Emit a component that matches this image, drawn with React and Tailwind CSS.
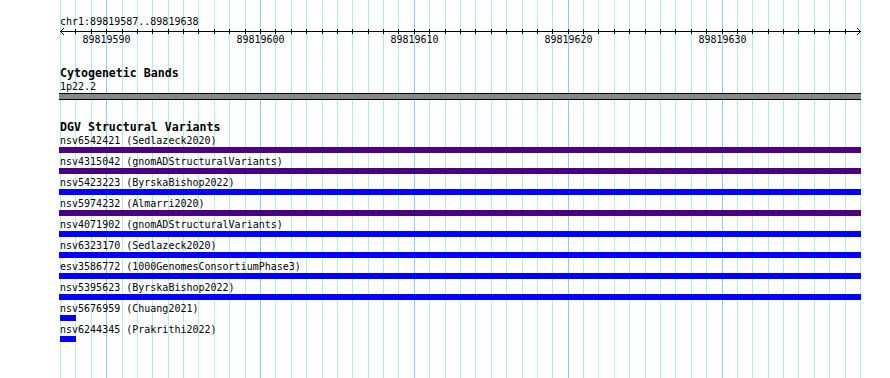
import React from "react";

const START = 89819587;
const END = 89819638;
const PX = 800 / (END - START + 1);

const xs = Array.from({ length: END - START + 2 }, (_, i) => Math.round(60 + i * PX));

const variants = [
  { id: "nsv6542421", src: "Sedlazeck2020", color: "purple", full: true },
  { id: "nsv4315042", src: "gnomADStructuralVariants", color: "purple", full: true },
  { id: "nsv5423223", src: "ByrskaBishop2022", color: "blue", full: true },
  { id: "nsv5974232", src: "Almarri2020", color: "purple", full: true },
  { id: "nsv4071902", src: "gnomADStructuralVariants", color: "blue", full: true },
  { id: "nsv6323170", src: "Sedlazeck2020", color: "blue", full: true },
  { id: "esv3586772", src: "1000GenomesConsortiumPhase3", color: "blue", full: true },
  { id: "nsv5395623", src: "ByrskaBishop2022", color: "blue", full: true },
  { id: "nsv5676959", src: "Chuang2021", color: "blue", full: false },
  { id: "nsv6244345", src: "Prakrithi2022", color: "blue", full: false },
];

function Grid() {
  return (
    <svg className="absolute inset-0" width="890" height="378">
      {xs.map((x, i) => (
        <line
          key={i}
          x1={x + 0.5}
          x2={x + 0.5}
          y1="0"
          y2="378"
          stroke={(START + i) % 10 === 0 ? "#87cefa" : "#afeeee"}
          strokeWidth="1"
        />
      ))}
    </svg>
  );
}

function Ruler() {
  return (
    <svg className="block" width="890" height="19">
      <line x1="60" x2="861" y1="3.5" y2="3.5" stroke="#000" />
      {xs.slice(1, -1).map((x, i) => (
        <line key={i} x1={x + 0.5} x2={x + 0.5} y1="1" y2="6" stroke="#000" />
      ))}
      <polyline points="64,0 60.5,3.5 64,7" fill="none" stroke="#000" />
      <polyline points="857,0 860.5,3.5 857,7" fill="none" stroke="#000" />
      {xs.map((x, i) =>
        (START + i) % 10 === 0 ? (
          <text
            key={i}
            x={x + 0.5}
            y="15"
            textAnchor="middle"
            fontSize="10"
            fontFamily="'DejaVu Sans Mono', monospace"
            fill="#000"
          >
            {START + i}
          </text>
        ) : null
      )}
    </svg>
  );
}

export default function App() {
  return (
    <div className="relative w-[890px] h-[378px] overflow-hidden bg-white text-black font-['DejaVu_Sans_Mono',monospace] text-[10px] leading-[13px]">
      <Grid />
      <div className="relative pt-[15px]">
        <div className="pl-[60px] h-[13px] whitespace-pre">
          chr1:{START}..{END}
        </div>
        <Ruler />

        {/* cytogenetic bands */}
        <div className="mt-[20px] pl-[59px]">
          <div className="pl-[1px] h-[13px] font-bold text-[11.6px] leading-[13px] whitespace-pre">
            Cytogenetic Bands
          </div>
          <div className="pl-[1px] h-[13px] whitespace-pre">1p22.2</div>
          <div className="w-[802px] h-[7px] bg-[#878787] border-y border-black" />
        </div>

        {/* DGV */}
        <div className="mt-[21px] pl-[59px]">
          <div className="pl-[1px] h-[13px] font-bold text-[11.6px] leading-[13px] whitespace-pre">
            DGV Structural Variants
          </div>
          {variants.map((v) => (
            <div key={v.id} className="mb-[2px]">
              <div className="pl-[1px] h-[13px] whitespace-pre">
                {v.id} ({v.src})
              </div>
              <div
                className={
                  (v.full ? "w-[802px] " : "ml-[1px] w-[16px] ") +
                  "h-[6px] " +
                  (v.color === "purple" ? "bg-[#4b0082]" : "bg-[#0000ff]")
                }
              />
            </div>
          ))}
        </div>
      </div>
    </div>
  );
}
